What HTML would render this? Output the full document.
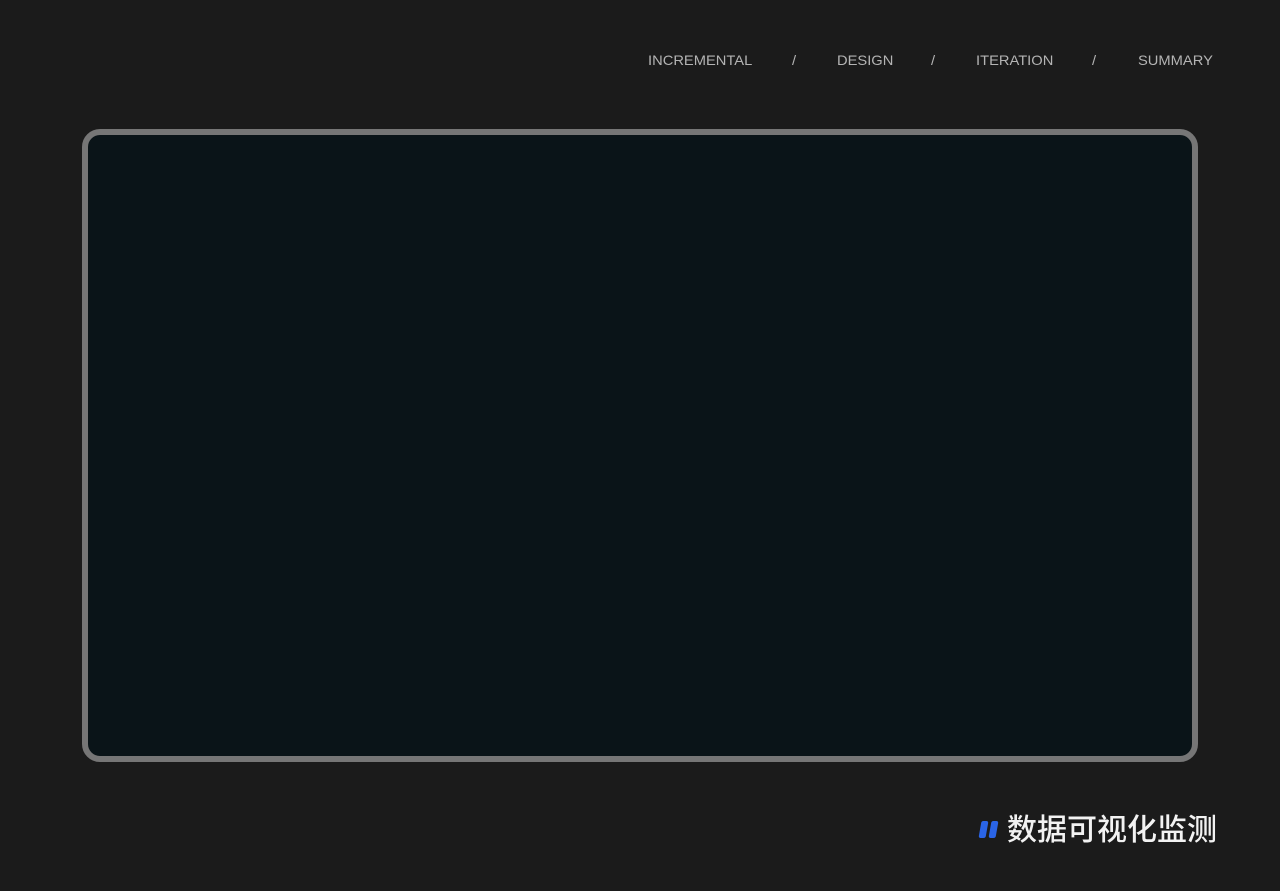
<!DOCTYPE html>
<html><head><meta charset="utf-8"><style>
html,body{margin:0;padding:0}
body{width:1280px;height:891px;background:#1b1b1b;position:relative;overflow:hidden;font-family:"Liberation Sans","Noto Sans CJK SC",sans-serif}
.nav{position:absolute;top:52px;font-size:14px;color:#b4b4b4;transform:scaleX(1.05);transform-origin:left}
.frame{position:absolute;left:82px;top:129px;width:1104px;height:621px;border:6px solid #767676;border-radius:18px;background:#0a1418}
.title{position:absolute;left:1007px;top:807px;font-size:30px;color:#f2f2f2;font-family:"Noto Sans CJK SC",sans-serif;font-weight:500;line-height:40px;white-space:nowrap}
.bar{position:absolute;top:821px;width:7px;height:17px;background:#2a64e6;border-radius:2px;transform:skewX(-10deg)}
</style></head><body>
<div class="nav" style="left:648px">INCREMENTAL</div>
<div class="nav" style="left:792px">/</div>
<div class="nav" style="left:837px">DESIGN</div>
<div class="nav" style="left:931px">/</div>
<div class="nav" style="left:976px">ITERATION</div>
<div class="nav" style="left:1092px">/</div>
<div class="nav" style="left:1138px">SUMMARY</div>
<div class="frame"></div>
<div class="bar" style="left:980px"></div>
<div class="bar" style="left:990px"></div>
<div class="title">数据可视化监测</div>
</body></html>
